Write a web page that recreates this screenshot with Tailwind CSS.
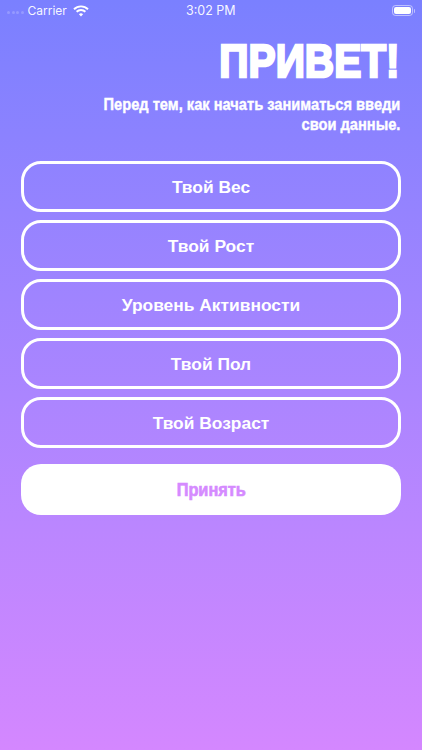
<!DOCTYPE html>
<html>
<head>
<meta charset="utf-8">
<script src="https://cdn.jsdelivr.net/npm/@tailwindcss/browser@4"></script>
</head>
<body class="m-0">
<div class="w-[422px] h-[750px] overflow-hidden flex flex-col bg-gradient-to-b from-[#7a80ff] to-[#d487ff] font-['Inter','Liberation_Sans',sans-serif] text-white">
  <div class="relative h-[21px] shrink-0 flex items-center justify-between pl-[7px] pr-[7px]">
    <div class="flex items-center">
      <div class="flex gap-[1.5px] mr-[4px] mt-[3px]">
        <span class="w-[3px] h-[3px] rounded-full bg-white/20"></span>
        <span class="w-[3px] h-[3px] rounded-full bg-white/20"></span>
        <span class="w-[3px] h-[3px] rounded-full bg-white/20"></span>
        <span class="w-[3px] h-[3px] rounded-full bg-white/20"></span>
      </div>
      <span class="text-[12px] leading-none text-white/95">Carrier</span>
      <svg class="ml-[6px]" width="16" height="12" viewBox="0 0 16 12" fill="none" stroke="white" stroke-width="1.9">
        <path d="M1 4.2a10 10 0 0 1 14 0"/>
        <path d="M3.6 6.8a6.3 6.3 0 0 1 8.8 0"/>
        <path d="M8 11.4 5.9 9.2a3 3 0 0 1 4.2 0Z" fill="white" stroke="none"/>
      </svg>
    </div>
    <span class="absolute left-[186px] top-[4px] text-[12.5px] leading-[14px] text-white/95">3:02 PM</span>
    <div class="flex items-center">
      <div class="w-[21px] h-[11px] rounded-[3.5px] border border-white/50 p-[1px]"><div class="w-full h-full rounded-[2px] bg-white"></div></div>
      <div class="w-[1px] h-[4px] ml-[1px] rounded-r bg-white/50"></div>
    </div>
  </div>

  <div class="shrink-0 pr-[22px] flex flex-col items-end font-['Liberation_Sans',sans-serif] font-bold">
    <h1 class="mt-[15px] h-[50px] text-[47px] leading-[50px] whitespace-nowrap origin-right scale-x-[0.864] [-webkit-text-stroke:2.5px_white]">ПРИВЕТ!</h1>
    <p class="mt-[9px] mr-[0px] text-[17px] leading-[20px] text-right whitespace-nowrap origin-right scale-x-[0.862] [-webkit-text-stroke:0.4px_white]">Перед тем, как начать заниматься введи<br>свои данные.</p>
  </div>

  <div class="mt-[26px] px-[21px] flex flex-col gap-[8px] text-[17.4px] font-bold font-['Liberation_Sans',sans-serif]">
    <button class="h-[51px] pt-[2px] rounded-[20px] border-[3px] border-white flex items-center justify-center">Твой Вес</button>
    <button class="h-[51px] pt-[2px] rounded-[20px] border-[3px] border-white flex items-center justify-center">Твой Рост</button>
    <button class="h-[51px] pt-[2px] rounded-[20px] border-[3px] border-white flex items-center justify-center">Уровень Активности</button>
    <button class="h-[51px] pt-[2px] rounded-[20px] border-[3px] border-white flex items-center justify-center">Твой Пол</button>
    <button class="h-[51px] pt-[2px] rounded-[20px] border-[3px] border-white flex items-center justify-center">Твой Возраст</button>
  </div>

  <div class="mt-[16px] px-[21px]">
    <button class="w-full h-[51px] pt-[1px] rounded-[20px] bg-white flex items-center justify-center font-['Liberation_Sans',sans-serif] font-bold text-[19px] text-[#d58aff]"><span class="scale-x-[0.86] [-webkit-text-stroke:0.7px_#d58aff]">Принять</span></button>
  </div>
</div>
</body>
</html>
